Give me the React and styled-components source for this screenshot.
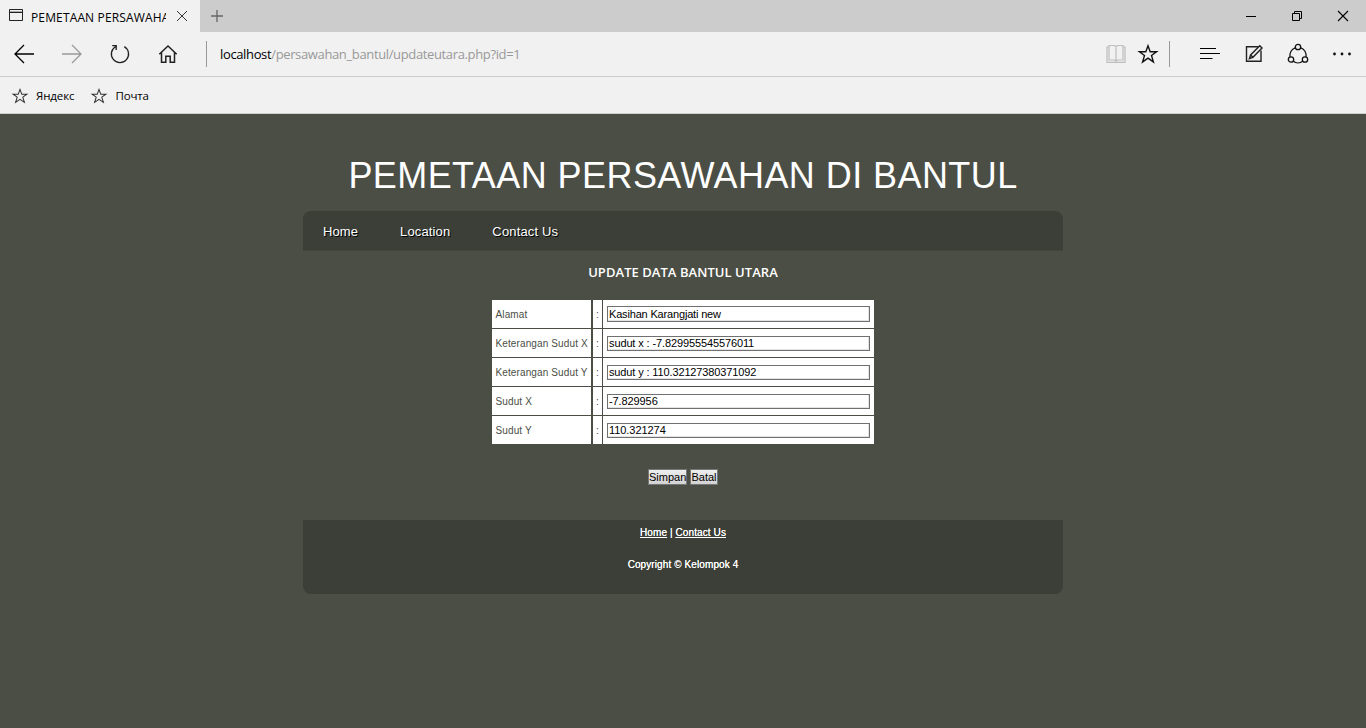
import React from 'react';
import styled, { createGlobalStyle } from 'styled-components';

const Global = createGlobalStyle`
  * { box-sizing: border-box; }
  html, body { margin: 0; height: 728px; overflow: hidden; background: #4b4e45; }
`;

const ui = '"Open Sans", "Noto Sans", sans-serif';
const arial = '"Liberation Sans", Arial, sans-serif';

const Window = styled.div`
  width: 1366px;
  height: 728px;
  display: flex;
  flex-direction: column;
  font-family: ${ui};
  color: #000;
  white-space: nowrap;
`;

const TitleBar = styled.div`
  height: 32px;
  display: flex;
  align-items: stretch;
  background: #cccccc;
`;
const Tab = styled.div`
  width: 200px;
  padding-left: 8px;
  display: flex;
  align-items: center;
  background: #f1f1f1;
`;
const TabTitle = styled.div`
  width: 135px;
  margin: 3px 9px 0 7px;
  overflow: hidden;
  font-size: 12px;
  line-height: 18px;
  letter-spacing: 0.14px;
`;
const NewTab = styled.div`
  padding: 8px 9px;
  flex: 1;
`;
const WindowButtons = styled.div`
  display: flex;
  align-items: center;
  gap: 30px;
  padding-right: 15px;
`;

const Toolbar = styled.div`
  height: 45px;
  display: flex;
  align-items: center;
  padding: 0 12px;
  background: #f1f1f1;
  border-bottom: 1px solid #cccccc;
`;
const Tools = styled.div`
  display: flex;
  align-items: center;
  gap: ${p => p.$gap}px;
`;
const Divider = styled.div`
  width: 1px;
  height: 26px;
  background: #999;
  margin: 0 ${p => p.$right}px 0 ${p => p.$left}px;
`;
const Address = styled.div`
  flex: 1;
  font-size: 13px;
  line-height: 20px;
  letter-spacing: -0.36px;
  color: #999;
  span { color: #000; }
`;

const Favorites = styled.div`
  height: 37px;
  display: flex;
  align-items: center;
  gap: 17px;
  padding: 1px 0 0 12px;
  background: #f1f1f1;
  border-bottom: 1px solid #cfcfcc;
`;
const Favorite = styled.div`
  display: flex;
  align-items: center;
  gap: 8px;
  font-size: 11.5px;
  line-height: 18px;
  letter-spacing: ${p => p.$spacing}px;
`;

const Page = styled.main`
  flex: 1;
  background: #4b4e45;
  font-family: ${arial};
`;
const Container = styled.div`
  width: 760px;
  margin: 0 auto;
  padding-top: 40px;
`;
const SiteTitle = styled.h1`
  margin: 0;
  height: 57px;
  line-height: 43px;
  font-size: 36px;
  font-weight: 400;
  letter-spacing: 0.43px;
  text-align: center;
  color: #fff;
`;
const Nav = styled.nav`
  height: 40px;
  display: flex;
  gap: 42px;
  padding: 1px 0 0 20px;
  background: #3c3f38;
  border-bottom: 1px solid #42453d;
  border-radius: 8px 8px 0 0;
`;
const NavLink = styled.a`
  font-size: 13px;
  line-height: 39px;
  color: #fff;
  text-shadow: 1px 1px 0 #000;
  letter-spacing: ${p => p.$spacing || 0}px;
`;
const Heading = styled.h2`
  margin: 11px 0 0;
  height: 38px;
  font: 600 13px/20px ${ui};
  letter-spacing: 0.05px;
  text-align: center;
  color: #fff;
`;
const FormGrid = styled.form`
  width: 382px;
  margin: 0 auto;
  display: grid;
  row-gap: 1px;
`;
const Row = styled.div`
  height: 28px;
  display: grid;
  grid-template-columns: 99px 2px 9px 1px 271px;
`;
const Cell = styled.div`
  grid-column: ${p => p.$col};
  display: flex;
  align-items: center;
  padding: 1px 0 0 ${p => p.$pad}px;
  background: #fff;
  color: #4b4e45;
  font-size: 10px;
  letter-spacing: ${p => p.$spacing || 0}px;
`;
const Field = styled.input`
  width: 263px;
  height: ${p => p.$tall ? 16 : 15}px;
  margin: 0 0 ${p => p.$tall ? 1 : 0}px;
  padding: 0 0 ${p => p.$tall ? 0 : 1}px 1px;
  border: 1px solid #707070;
  border-radius: 0;
  box-shadow: inset -1px -1px 0 #e3e3e3;
  background: #fff;
  font: 11px/12px ${arial};
  letter-spacing: ${p => p.$spacing || 0}px;
  color: #000;
  outline: none;
`;
const Actions = styled.div`
  display: flex;
  justify-content: center;
  gap: 3px;
  margin-top: 25px;
`;
const Button = styled.button`
  width: ${p => p.$width}px;
  height: 16px;
  padding: 0;
  border: 1px solid #777;
  border-radius: 0;
  background: linear-gradient(#eeeeee, #d2d2d2);
  font: 11px/14px ${arial};
  color: #000;
`;
const Footer = styled.footer`
  height: 74px;
  margin-top: 35px;
  padding-top: 6px;
  background: #3c3f38;
  border-radius: 0 0 8px 8px;
  text-align: center;
  color: #fff;
  font-size: 10px;
  line-height: 13px;
  letter-spacing: 0.1px;
  text-shadow: 0 0 0.4px #fff;
`;
const FooterLink = styled.a`
  text-decoration: underline;
`;
const Copyright = styled.p`
  margin: 19px 0 0;
`;

const Icon = styled.svg`
  display: block;
  flex: none;
  fill: none;
  stroke: ${p => p.$color || '#000'};
  stroke-width: ${p => p.$weight || 1.3};
  overflow: visible;
`;

const starPath = 'M10 1.8L12.2 7.7H18.6L13.5 11.5L15.4 17.9L10 14.1L4.6 17.9L6.5 11.5L1.4 7.7H7.8Z';
const Star = ({ size, weight, color }) => (
  <Icon width={size} height={size} viewBox="0 0 20 20" $weight={weight} $color={color}>
    <path d={starPath} />
  </Icon>
);

const rows = [
  { label: 'Alamat', value: 'Kasihan Karangjati new', spacing: -0.17 },
  { label: 'Keterangan Sudut X', value: 'sudut x : -7.829955545576011', spacing: -0.12 },
  { label: 'Keterangan Sudut Y', value: 'sudut y : 110.32127380371092', spacing: -0.13 },
  { label: 'Sudut X', value: '-7.829956', spacing: -0.1 },
  { label: 'Sudut Y', value: '110.321274', spacing: -0.06 },
];

export default function App() {
  return (
    <Window>
      <Global />
      <TitleBar>
        <Tab>
          <Icon width="16" height="16" $color="#222" $weight={1}>
            <path d="M1.5 1.5H14.5V12.5H1.5ZM1.5 4.5H14.5" />
            <path d="M2 3.5H14" stroke="#aaa" />
          </Icon>
          <TabTitle>PEMETAAN PERSAWAHAN</TabTitle>
          <Icon width="14" height="14" $color="#333" $weight={1}>
            <path d="M2 2L12 12M12 2L2 12" />
          </Icon>
        </Tab>
        <NewTab>
          <Icon width="16" height="16" $color="#666" $weight={1.3}>
            <path d="M8 2V14M2 8H14" />
          </Icon>
        </NewTab>
        <WindowButtons>
          <Icon width="16" height="16" $weight={1}><path d="M3 8.5H13" /></Icon>
          <Icon width="16" height="16" $weight={1}>
            <path d="M3.5 5.5H10.5V12.5H3.5ZM5.5 5V3.5H12.5V10.5H11" />
          </Icon>
          <Icon width="16" height="16" $weight={1.1}><path d="M3 3L13 13M13 3L3 13" /></Icon>
        </WindowButtons>
      </TitleBar>
      <Toolbar>
        <Tools $gap={24}>
          <Icon width="24" height="24"><path d="M22 12H3M12 3L3 12L12 21" /></Icon>
          <Icon width="24" height="24" $color="#999"><path d="M2 12H21M12 3L21 12L12 21" /></Icon>
          <Icon width="24" height="24" $color="#222">
            <path d="M7.8 4.5A8.6 8.6 0 1 0 16.3 4.6M4.2 3.7H8.2V8" />
          </Icon>
          <Icon width="24" height="24" $color="#222" $weight={1.5}>
            <path d="M3.3 12.3L12 4L20.7 12.3M5.5 10.5V20.3H9.8V14.3H14.2V20.3H18.5V10.5" />
          </Icon>
        </Tools>
        <Divider $left={26} $right={13} />
        <Address><span>localhost</span>/persawahan_bantul/updateutara.php?id=1</Address>
        <Tools $gap={12}>
          <Icon width="20" height="20" $color="#bdbdbd" $weight={1.2}>
            <path d="M3 3H1V18.3H19V3H17M3 1.5H8.5L10 2.8L11.5 1.5H17V16H11.5L10 17L8.5 16H3ZM10 2.8V17" />
          </Icon>
          <Star size={20} weight={1.4} color="#111" />
        </Tools>
        <Divider $left={11} $right={28} />
        <Tools $gap={20}>
          <Icon width="24" height="24" $weight={1.2}><path d="M2 6.5H18M2 11.5H22M2 16.5H14.5" /></Icon>
          <Icon width="24" height="24" $color="#222" $weight={1.4}>
            <path d="M16.5 4.7H4.5V19.3H19V8.5" />
            <path d="M7.4 16.6L8.6 13L17.8 3.8L20 6L10.9 15.3ZM8.6 13L10.9 15.3" />
          </Icon>
          <Icon width="24" height="24" $color="#111" $weight={1.3}>
            <circle cx="12" cy="5" r="2.7" /><circle cx="5" cy="17.5" r="2.7" /><circle cx="19" cy="17.5" r="2.7" />
            <path d="M9.2 5.8C5.5 7.2 3.5 11 4 14.8M14.8 5.8C18.5 7.2 20.5 11 20 14.8M7.3 19.3C10 21.5 14 21.5 16.7 19.3" />
          </Icon>
          <Icon width="24" height="24">
            <g fill="#111" stroke="none"><circle cx="4.5" cy="12" r="1.4" /><circle cx="12" cy="12" r="1.4" /><circle cx="19.5" cy="12" r="1.4" /></g>
          </Icon>
        </Tools>
      </Toolbar>
      <Favorites>
        <Favorite $spacing={-0.1}><Star size={16} weight={1.3} color="#333" />Яндекс</Favorite>
        <Favorite $spacing={-0.15}><Star size={16} weight={1.3} color="#333" />Почта</Favorite>
      </Favorites>
      <Page>
        <Container>
          <SiteTitle>PEMETAAN PERSAWAHAN DI BANTUL</SiteTitle>
          <Nav>
            <NavLink $spacing={0.1}>Home</NavLink>
            <NavLink $spacing={0.14}>Location</NavLink>
            <NavLink $spacing={0.15}>Contact Us</NavLink>
          </Nav>
          <Heading>UPDATE DATA BANTUL UTARA</Heading>
          <FormGrid>
            {rows.map((row, i) => (
              <Row key={row.label}>
                <Cell $col={1} $pad={3.5} $spacing={0.12}>{row.label}</Cell>
                <Cell $col={3} $pad={3}>:</Cell>
                <Cell $col={5} $pad={4}>
                  <Field defaultValue={row.value} $tall={i === 0} $spacing={row.spacing} />
                </Cell>
              </Row>
            ))}
          </FormGrid>
          <Actions>
            <Button type="button" $width={39}>Simpan</Button>
            <Button type="button" $width={28}>Batal</Button>
          </Actions>
          <Footer>
            <FooterLink>Home</FooterLink> | <FooterLink>Contact Us</FooterLink>
            <Copyright>Copyright © Kelompok 4</Copyright>
          </Footer>
        </Container>
      </Page>
    </Window>
  );
}
